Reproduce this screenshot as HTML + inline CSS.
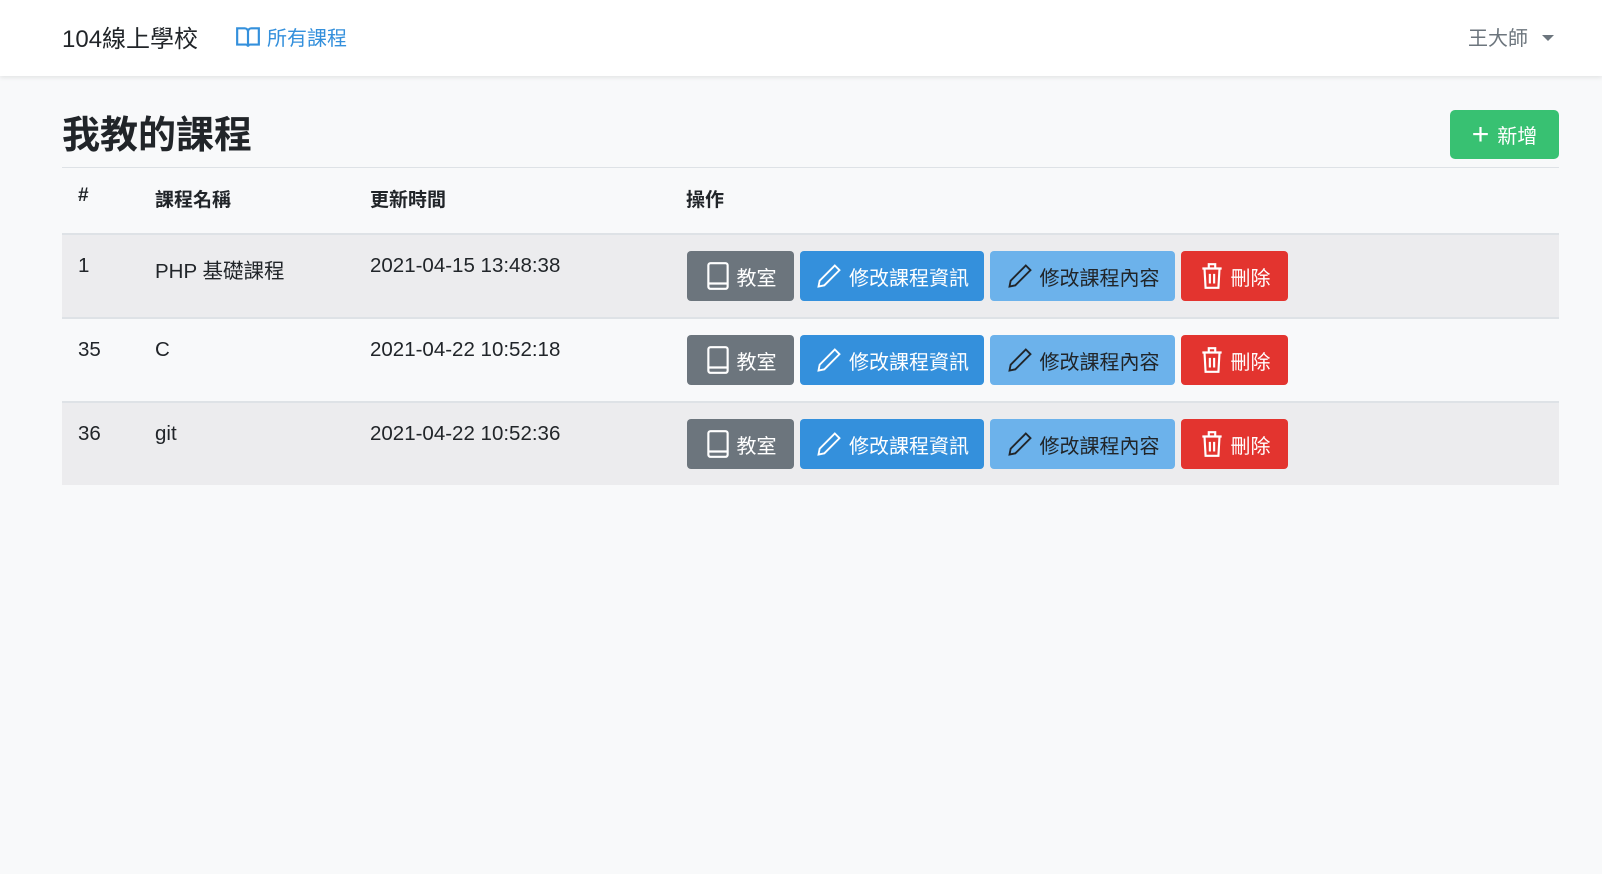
<!DOCTYPE html>
<html><head><meta charset="utf-8"><style>
*{box-sizing:border-box;margin:0;padding:0}
body{width:1602px;height:874px;background:#f8f9fa;font-family:"Liberation Sans","Noto Sans CJK TC",sans-serif;color:#212529;position:relative;overflow:hidden}
.nav{position:absolute;left:0;top:0;width:1602px;height:76px;background:#fff;box-shadow:0 2px 4px rgba(0,0,0,.08)}
.brand{position:absolute;left:62px;top:19px;font-size:24px;color:#212529}
.link{position:absolute;left:235px;top:22px;font-size:20px;color:#3490dc;display:flex;align-items:center;gap:6px}
.user{position:absolute;left:1468px;top:22px;font-size:20px;color:#6c757d}
.user:after{content:"";display:inline-block;margin-left:14px;vertical-align:4px;border-top:6px solid #6c757d;border-left:6px solid transparent;border-right:6px solid transparent}
h1{position:absolute;left:62px;top:104px;font-size:38px;font-weight:bold}
.add{position:absolute;left:1450px;top:110px;width:109px;height:49px;background:#38c172;border-radius:5px;color:#fff;font-size:20px;display:flex;align-items:center;justify-content:center;gap:8px}
.hr{position:absolute;left:62px;top:167px;width:1497px;height:1px;background:#dee2e6}
.th{position:absolute;top:185px;font-size:19px;font-weight:bold}
.row{position:absolute;left:62px;width:1497px;height:84px;border-top:2px solid #dee2e6}
.row.g{background:#ececee}
.c{position:absolute;top:19px;font-size:20.5px}
.b{position:absolute;top:16px;height:50px;border-radius:4px;color:#fff;font-size:20px;display:flex;align-items:center;justify-content:center;gap:6px;white-space:nowrap}
</style></head><body>
<div class="nav">
<div class="brand">104線上學校</div>
<div class="link"><svg width="26" height="26" viewBox="0 0 24 24" fill="none" stroke="#3490dc" stroke-width="2"><path d="M2 4h7a3 3 0 0 1 3 3v14a2 2 0 0 0-2-2H2z M22 4h-7a3 3 0 0 0-3 3v14a2 2 0 0 1 2-2h8z"/></svg>所有課程</div>
<div class="user">王大師</div>
</div>
<h1>我教的課程</h1>
<div class="add"><span style="font-size:30px;font-weight:300;line-height:1">+</span>新增</div>
<div class="hr"></div>
<div class="th" style="left:78px">#</div>
<div class="th" style="left:155px">課程名稱</div>
<div class="th" style="left:370px">更新時間</div>
<div class="th" style="left:686px">操作</div>

<div class="row g" style="top:233px"><div class="c" style="left:16px">1</div><div class="c" style="left:93px">PHP 基礎課程</div><div class="c" style="left:308px">2021-04-15 13:48:38</div>
BTN</div>
<div class="row" style="top:317px"><div class="c" style="left:16px">35</div><div class="c" style="left:93px">C</div><div class="c" style="left:308px">2021-04-22 10:52:18</div>
BTN</div>
<div class="row g" style="top:401px;height:84px"><div class="c" style="left:16px">36</div><div class="c" style="left:93px">git</div><div class="c" style="left:308px">2021-04-22 10:52:36</div>
BTN</div>
<script>
var b='<div class="b" style="left:625px;width:107px;background:#6c757d"><svg width="26" height="30" viewBox="0 0 24 28" fill="none" stroke="#fff" stroke-width="2"><rect x="3" y="2" width="18" height="24" rx="2"/><path d="M3 21h18"/></svg>教室</div>'+
'<div class="b" style="left:738px;width:184px;background:#3490dc"><svg width="28" height="28" viewBox="0 0 24 24" fill="none" stroke="#fff" stroke-width="1.6"><path d="M17 3l4 4L8 20l-5 1 1-5z"/></svg>修改課程資訊</div>'+
'<div class="b" style="left:928px;width:185px;background:#6cb2eb;color:#212529"><svg width="28" height="28" viewBox="0 0 24 24" fill="none" stroke="#212529" stroke-width="1.6"><path d="M17 3l4 4L8 20l-5 1 1-5z"/></svg>修改課程內容</div>'+
'<div class="b" style="left:1119px;width:107px;background:#e3342f"><svg width="26" height="30" viewBox="0 0 24 28" fill="none" stroke="#fff" stroke-width="2"><path d="M3 7h18M9 7V3h6v4M5 7l1 18h12l1-18M10 12v9M14 12v9"/></svg>刪除</div>';
document.body.innerHTML=document.body.innerHTML.split('BTN').join(b);
</script>
</body></html>
